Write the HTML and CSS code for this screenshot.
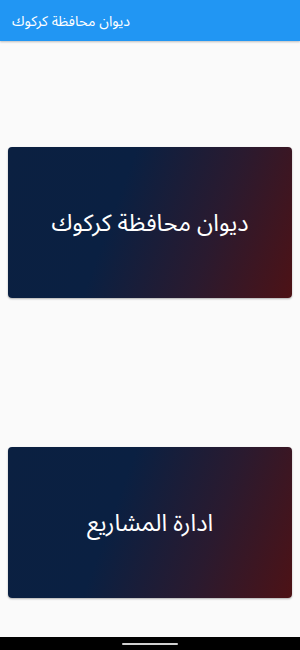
FILE: index.html
```html
<!DOCTYPE html>
<html lang="ar">
<head>
<meta charset="utf-8">
<link rel="stylesheet" href="styles.css">
</head>
<body>
<div class="screen">
  <header class="appbar"><span class="title" dir="rtl">ديوان محافظة كركوك</span></header>
  <main class="content">
    <div class="card"><span dir="rtl">ديوان محافظة كركوك</span></div>
    <div class="card"><span dir="rtl">ادارة المشاريع</span></div>
  </main>
  <footer class="navbar"><div class="handle"></div></footer>
</div>
</body>
</html>
```
FILE: styles.css
```css
html, body { margin: 0; padding: 0; }
body { width: 300px; height: 650px; background: #fafafa; font-family: "Noto Sans Arabic", "DejaVu Sans", "Noto Sans", sans-serif; overflow: hidden; }
.screen { display: flex; flex-direction: column; height: 650px; }
.appbar { height: 41px; background: #2196f3; display: flex; align-items: center; padding: 0 12px; box-shadow: 0 1px 2px rgba(0,0,0,0.25); flex: none; position: relative; z-index: 1; }
.title { color: #fff; font-size: 14.2px; }
.content { flex: 1; display: flex; flex-direction: column; padding: 106px 8px 0; gap: 149px; }
.card { height: 151px; border-radius: 4px; background: linear-gradient(110deg, #0b2041 0%, #0a2042 38%, #2a1a2f 70%, #4d1216 100%); display: flex; align-items: center; justify-content: center; color: #fff; font-size: 23.7px; box-shadow: 0 1px 2px rgba(0,0,0,0.3); }
.navbar { height: 13px; background: #000; display: flex; justify-content: center; align-items: center; flex: none; }
.handle { width: 56px; height: 2px; border-radius: 1px; background: #d0d0d0; }
```
